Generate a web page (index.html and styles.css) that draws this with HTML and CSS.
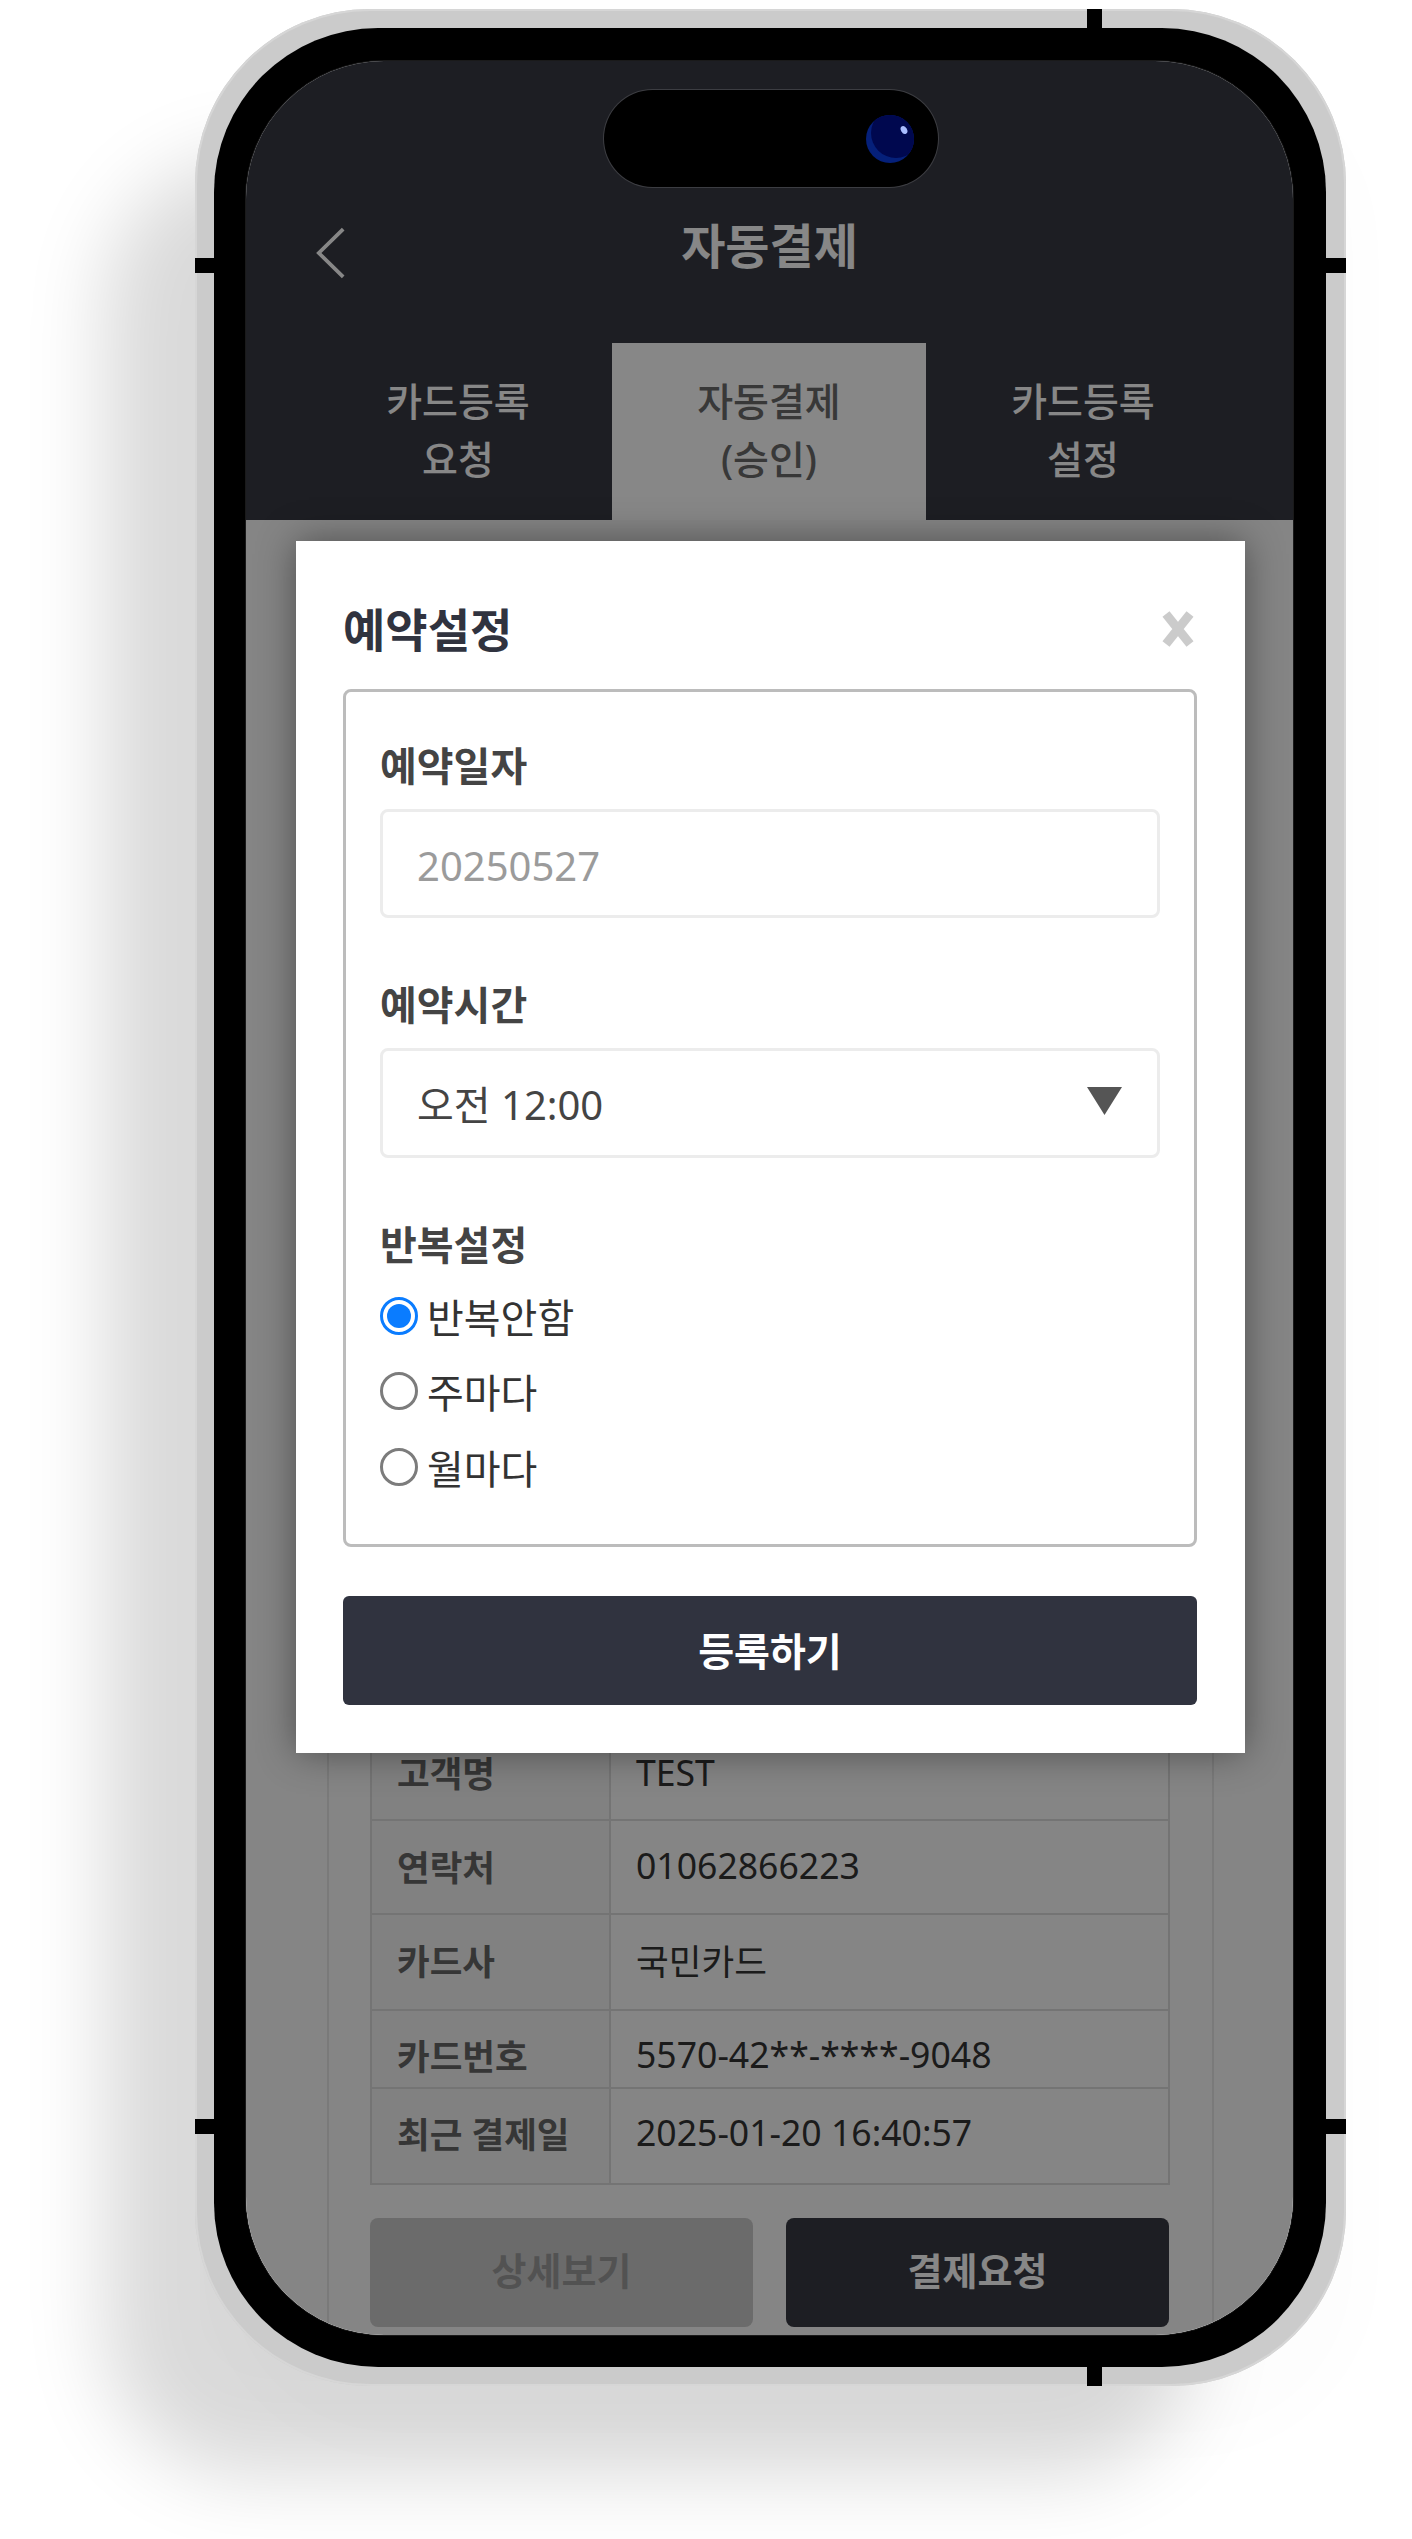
FILE: index.html
```html
<!DOCTYPE html>
<html lang="ko">
<head>
<meta charset="utf-8">
<title>자동결제</title>
<link rel="stylesheet" href="styles.css">
</head>
<body>
<div class="phone">
  <span class="notch notch-lt"></span>
  <span class="notch notch-rt"></span>
  <span class="notch notch-lb"></span>
  <span class="notch notch-rb"></span>
  <span class="notch notch-top"></span>
  <span class="notch notch-bottom"></span>
  <div class="bezel">
    <div class="screen">
      <header class="app-header">
        <svg class="back" viewBox="0 0 32 56"><path d="M29 2.500 3 28l26 25.500"/></svg>
        <h1 class="app-title">자동결제</h1>
      </header>
      <nav class="tabs">
        <div class="tab">카드등록<br>요청</div>
        <div class="tab tab-active">자동결제<br>(승인)</div>
        <div class="tab">카드등록<br>설정</div>
      </nav>
      <main class="content">
        <section class="card">
          <table class="info">
            <tr class="row-a"><th>고객명</th><td>TEST</td></tr>
            <tr class="row-b"><th>연락처</th><td>01062866223</td></tr>
            <tr class="row-c"><th>카드사</th><td>국민카드</td></tr>
            <tr class="row-d"><th>카드번호</th><td>5570-42**-****-9048</td></tr>
            <tr class="row-e"><th>최근 결제일</th><td>2025-01-20 16:40:57</td></tr>
          </table>
          <div class="actions">
            <button class="btn btn-muted">상세보기</button>
            <button class="btn btn-dark">결제요청</button>
          </div>
        </section>
      </main>
      <div class="overlay"></div>
      <div class="island">
        <svg class="camera" viewBox="0 0 48 48">
          <defs><clipPath id="lens"><circle cx="24" cy="24" r="24"/></clipPath></defs>
          <g clip-path="url(#lens)">
            <rect width="48" height="48" fill="#05207a"/>
            <circle cx="30" cy="18" r="25" fill="#00084f"/>
          </g>
          <ellipse cx="38" cy="15" rx="3" ry="4.200" transform="rotate(-30 38 15)" fill="#a9bdff"/>
        </svg>
      </div>
      <div class="modal">
        <div class="modal-head">
          <h2 class="modal-title">예약설정</h2>
          <svg class="close" viewBox="0 0 34 38"><path d="M5 4 29 34M29 4 5 34"/></svg>
        </div>
        <form class="form-box">
          <label class="field-label">예약일자</label>
          <div class="control control-date">20250527</div>
          <label class="field-label">예약시간</label>
          <div class="control control-select">
            <span>오전 12:00</span>
            <svg class="caret" viewBox="0 0 35 28"><path d="M0 0H35L17.500 28Z"/></svg>
          </div>
          <label class="field-label field-label-repeat">반복설정</label>
          <label class="radio-row"><input type="radio" name="repeat" checked><span>반복안함</span></label>
          <label class="radio-row"><input type="radio" name="repeat"><span>주마다</span></label>
          <label class="radio-row"><input type="radio" name="repeat"><span>월마다</span></label>
        </form>
        <button class="submit">등록하기</button>
      </div>
    </div>
  </div>
</div>
</body>
</html>
```

FILE: styles.css
```css
* { box-sizing: border-box; }
html, body { margin: 0; padding: 0; background: #fff; }
body {
  width: 1412px;
  height: 2539px;
  overflow: hidden;
  font-family: "Noto Sans", "Noto Sans CJK KR", sans-serif;
  padding: 9px 0 0 195px;
}
.phone {
  position: relative;
  width: 1151px;
  height: 2377px;
  border-radius: 175px;
  background: #cbcbcb;
  padding: 19px 20px 19px 19px;
  box-shadow: -120px 120px 80px -30px rgba(0, 0, 0, .15), 20px 60px 60px rgba(0, 0, 0, .012), inset 0 0 0 2px #d6d6d6;
}
.notch { position: absolute; background: #000; }
.notch-lt, .notch-rt, .notch-lb, .notch-rb { width: 20px; height: 15px; }
.notch-lt, .notch-lb { left: 0; }
.notch-rt, .notch-rb { right: 0; }
.notch-lt, .notch-rt { top: 249px; }
.notch-lb, .notch-rb { top: 2110px; }
.notch-top, .notch-bottom { width: 15px; height: 20px; left: 892px; }
.notch-top { top: 0; }
.notch-bottom { bottom: 0; }
.bezel {
  height: 100%;
  background: #000;
  border-radius: 164px;
  padding: 33px 33px 32px 32px;
}
.screen {
  position: relative;
  height: 100%;
  overflow: hidden;
  border-radius: 138px;
  background: #fbfbfb;
  display: flex;
  flex-direction: column;
  box-shadow: 0 0 0 1px rgba(255, 255, 255, .1);
}
.app-header {
  flex: none;
  height: 282px;
  background: #373942;
  display: flex;
  justify-content: center;
  padding-top: 155px;
  position: relative;
}
.back {
  position: absolute;
  left: 70px;
  top: 165px;
  width: 30px;
  height: 54px;
  fill: none;
  stroke: #fff;
  stroke-width: 4;
}
.app-title {
  margin: 0;
  font-size: 48px;
  line-height: 60px;
  font-weight: 700;
  color: #fff;
}
.tabs {
  flex: none;
  display: flex;
  height: 177px;
  background: #373942;
  padding: 0 53px 0 52px;
}
.tab {
  flex: none;
  width: 314px;
  display: flex;
  align-items: center;
  justify-content: center;
  text-align: center;
  font-size: 39px;
  font-weight: 500;
  line-height: 58px;
  color: #fff;
  padding-bottom: 3px;
}
.tab:first-child { padding-left: 6px; }
.tab-active { background: #fff; color: #6a6a6a; }
.content {
  flex: 1;
  padding: 0 79px 0 81px;
  background: #fbfbfb;
  min-height: 0;
}
.card {
  height: 100%;
  margin-top: 30px;
  border: 2px solid #e6e6e6;
  border-bottom: 0;
  padding: 1172px 43px 0 41px;
}
.info {
  width: 800px;
  border-collapse: collapse;
  table-layout: fixed;
  font-size: 35.600px;
  color: #333;
}
.info th, .info td { border: 2px solid #dcdcdc; padding: 0 0 4px 25px; text-align: left; }
.info th { width: 239px; background: #f4f4f4; font-weight: 700; font-size: 35.500px; color: #666; }
.info td { color: #333; }
.row-a { height: 95px; }
.row-a th, .row-a td { padding-bottom: 2px; }
.row-b { height: 94px; }
.row-c { height: 96px; }
.row-c th, .row-c td { padding-bottom: 6px; }
.row-d { height: 78px; }
.row-d th, .row-d td { padding-top: 10px; padding-bottom: 0; }
.row-e { height: 96px; }
.row-e th, .row-e td { padding-bottom: 8px; }
.actions { display: flex; gap: 33px; margin-top: 33px; }
.btn {
  flex: 1;
  height: 109px;
  border: 0;
  border-radius: 8px;
  padding: 0 0 8px;
  font: 700 38px "Noto Sans", "Noto Sans CJK KR", sans-serif;
}
.btn-muted { background: #cbcbcb; color: #9c9c9c; }
.btn-dark { background: #373942; color: #fff; }
.overlay { position: absolute; inset: 0; background: rgba(0, 0, 0, .47); }
.island {
  position: absolute;
  left: 358px;
  top: 29px;
  width: 334px;
  height: 97px;
  border-radius: 49px;
  background: #000;
  box-shadow: 0 0 0 1px rgba(255, 255, 255, .14);
  display: flex;
  align-items: center;
  justify-content: flex-end;
  padding-right: 24px;
}
.camera { width: 48px; height: 48px; }
.modal {
  position: absolute;
  left: 50px;
  top: 480px;
  width: 949px;
  height: 1212px;
  background: #fff;
  box-shadow: 0 0 36px rgba(0, 0, 0, .42);
  padding: 0 48px 0 47px;
}
.modal-head {
  height: 148px;
  display: flex;
  align-items: center;
  justify-content: space-between;
  padding-top: 27px;
}
.modal-title {
  margin: 0;
  font-size: 46px;
  line-height: 60px;
  font-weight: 700;
  color: #30333f;
}
.close {
  width: 34px;
  height: 38px;
  margin-right: 2px;
  fill: none;
  stroke: #cbcbcb;
  stroke-width: 9;
}
.form-box {
  height: 858px;
  border: 3px solid #bcbcbc;
  border-radius: 8px;
  padding: 45px 34px 0 34px;
}
.field-label {
  display: block;
  font-size: 40px;
  line-height: 58px;
  font-weight: 700;
  color: #444;
  margin-bottom: 14px;
}
.control {
  height: 109px;
  border: 3px solid #ececec;
  border-radius: 8px;
  padding: 0 34px;
  display: flex;
  align-items: center;
  font-size: 40px;
  margin-bottom: 58px;
}
.control-date { color: #9b9b9b; padding-top: 3px; }
.control-select { height: 110px; justify-content: space-between; color: #444; }
.caret { width: 35px; height: 28px; fill: #555; margin-right: 1px; margin-top: -5px; }
.field-label-repeat { margin-bottom: 4px; }
.radio-row {
  display: flex;
  align-items: center;
  height: 75.500px;
  font-size: 40px;
  color: #333;
  gap: 9px;
}
.radio-row input {
  appearance: none;
  width: 38px;
  height: 38px;
  margin: 0;
  flex: none;
  border: 3px solid #7c7c7c;
  border-radius: 50%;
  background: #fff;
}
.radio-row input:checked {
  border-color: #0a7cff;
  padding: 4px;
  background: #0a7cff content-box;
}
.submit {
  display: block;
  width: 100%;
  height: 109px;
  margin-top: 49px;
  border: 0;
  border-radius: 6px;
  padding: 0 0 3px;
  background: #30333f;
  color: #fff;
  font: 700 39px "Noto Sans", "Noto Sans CJK KR", sans-serif;
}
```
